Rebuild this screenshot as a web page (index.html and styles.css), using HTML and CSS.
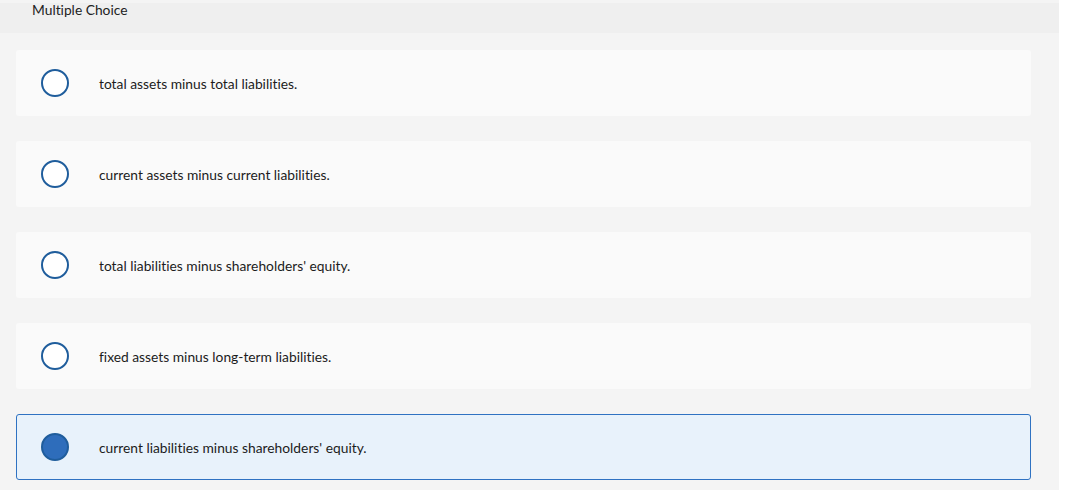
FILE: index.html
```html
<!DOCTYPE html>
<html lang="en">
<head>
  <meta charset="UTF-8">
  <link rel="stylesheet" href="styles.css">
  <title>Multiple Choice</title>
</head>
<body>
  <main class="question">
    <header class="question-header">
      <h2>Multiple Choice</h2>
    </header>
    <form class="choices">
      <label class="choice">
        <span class="radio"></span>
        <span class="choice-text">total assets minus total liabilities.</span>
      </label>
      <label class="choice">
        <span class="radio"></span>
        <span class="choice-text">current assets minus current liabilities.</span>
      </label>
      <label class="choice">
        <span class="radio"></span>
        <span class="choice-text">total liabilities minus shareholders' equity.</span>
      </label>
      <label class="choice">
        <span class="radio"></span>
        <span class="choice-text">fixed assets minus long-term liabilities.</span>
      </label>
      <label class="choice selected">
        <span class="radio"></span>
        <span class="choice-text">current liabilities minus shareholders' equity.</span>
      </label>
    </form>
  </main>
</body>
</html>
```

FILE: styles.css
```css
body {
  margin: 0;
  background-color: #fff;
  font-family: 'Lato', sans-serif;
  font-variant-ligatures: none;
}

.question {
  width: 1059px;
  height: 490px;
  background-color: #f4f4f4;
  padding-top: 3px;
  box-sizing: border-box;
}

.question-header {
  height: 30px;
  background-color: #efefef;
  padding-left: 32px;
}

.question-header h2 {
  margin: 0;
  font-size: 13.8px;
  font-weight: 400;
  line-height: 13px;
  color: #222;
}

.choices {
  display: flex;
  flex-direction: column;
  gap: 25px;
  padding: 17px 28px 0 16px;
}

.choice {
  display: flex;
  align-items: center;
  height: 66px;
  box-sizing: border-box;
  padding-left: 24px;
  background-color: #fafafa;
  border: 1px solid transparent;
  border-radius: 3px;
}

.radio {
  width: 28px;
  height: 28px;
  box-sizing: border-box;
  border: 2px solid #1f5d9c;
  border-radius: 50%;
  background-color: #fff;
  margin-right: 30px;
}

.choice-text {
  font-size: 13.8px;
  color: #1c1c1c;
}

.choice.selected {
  background-color: #e8f2fb;
  border-color: #2f72c2;
}

.choice.selected .radio {
  background-color: #2e6dbb;
  border-color: #1f5d9c;
}
```
